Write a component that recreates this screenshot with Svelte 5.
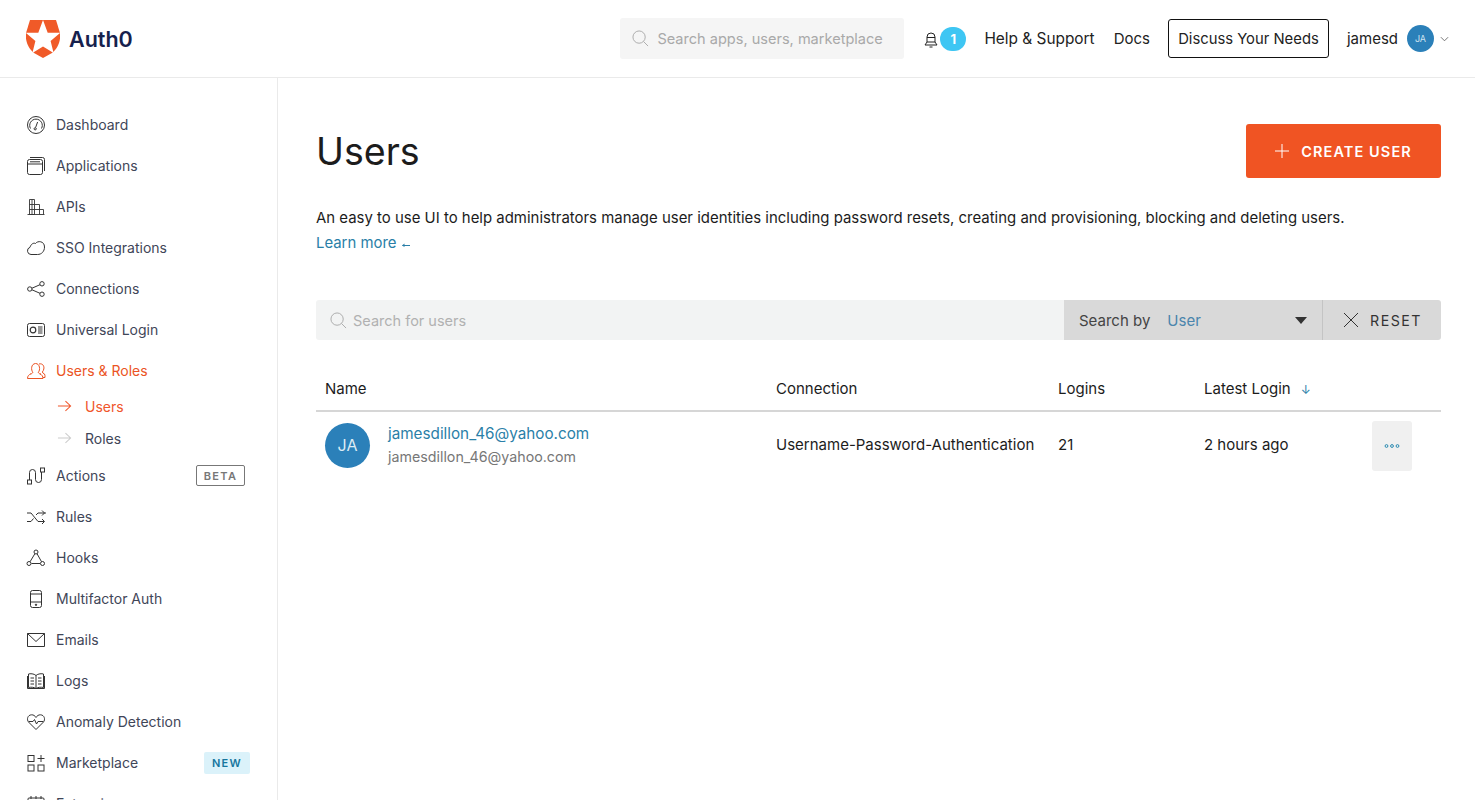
<script lang="ts">
	type NavItem = { label: string; icon: string; active?: boolean; badge?: string; sub?: { label: string; active?: boolean }[] };

	const nav: NavItem[] = [
		{ label: 'Dashboard', icon: 'dashboard' },
		{ label: 'Applications', icon: 'apps' },
		{ label: 'APIs', icon: 'apis' },
		{ label: 'SSO Integrations', icon: 'cloud' },
		{ label: 'Connections', icon: 'share' },
		{ label: 'Universal Login', icon: 'login' },
		{
			label: 'Users & Roles',
			icon: 'users',
			active: true,
			sub: [{ label: 'Users', active: true }, { label: 'Roles' }]
		},
		{ label: 'Actions', icon: 'actions', badge: 'BETA' },
		{ label: 'Rules', icon: 'rules' },
		{ label: 'Hooks', icon: 'hooks' },
		{ label: 'Multifactor Auth', icon: 'phone' },
		{ label: 'Emails', icon: 'mail' },
		{ label: 'Logs', icon: 'book' },
		{ label: 'Anomaly Detection', icon: 'heart' },
		{ label: 'Marketplace', icon: 'market', badge: 'NEW' },
		{ label: 'Extensions', icon: 'ext' }
	];
</script>

{#snippet navIcon(name: string)}
	<svg class="nav-icon" viewBox="0 0 20 20" fill="none" stroke="currentColor" stroke-width="1">
		{#if name === 'dashboard'}
			<circle cx="10" cy="10" r="8.5" />
			<path d="M4.5 13.500a6.300 6.300 0 1 1 11 0" />
			<path d="M9.600 12.500l2-5.500" /><circle cx="9.200" cy="13.800" r="1.100" />
		{:else if name === 'apps'}
			<rect x="1.500" y="3.500" width="15" height="15" rx="2" />
			<path d="M4 1.500h12.500a2 2 0 0 1 2 2V15M1.500 8h15M4 5.800h10" />
		{:else if name === 'apis'}
			<path d="M3.500 2.500h5v15h-5zM3.500 7.500h5M3.500 12.500h14v5M8.500 7.500h5v10M1.500 17.500h17M6 2.500v15" stroke-width=".9" />
		{:else if name === 'cloud'}
			<path d="M5 16.500a3.700 3.700 0 0 1-1-7.200C5 6 7.500 4.500 9.500 5.500 11.500 2.500 18.500 2.800 18.500 9c0 4.500-3 7.500-7 7.500z" />
		{:else if name === 'share'}
			<circle cx="3.800" cy="10" r="2.200" /><circle cx="16" cy="4.800" r="2.200" /><circle cx="16" cy="15.200" r="2.200" />
			<path d="M6 9.200l8-3.500M6 10.800l8 3.500" />
		{:else if name === 'login'}
			<rect x="1.500" y="3.500" width="17" height="13" rx="2" />
			<circle cx="7" cy="10" r="2.800" stroke-width="1.200" />
			<path d="M12 7h4.500M12 9h4.500M12 11h4.500M12 13h4.500" />
		{:else if name === 'users'}
			<path d="M4 13c1.500 0 2.500-.6 2.800-1.700C5 9 4.800 3 9.500 2.500 14 2.500 14.500 9 12.300 11.300c.3 1.100 1.200 1.700 2.700 1.700" />
			<path d="M1.500 17.500c0-2.500 1.500-4 3-4.300M1.500 17.500h15.500c0-2-1.200-4-3-4.500" />
			<path d="M13 3c3.500-1 5.500 2 4.800 5-.2 1.200-.8 2.300-1.500 3 .3 1 1 1.500 2.200 2 .5 1 .6 2 .5 3.500h-2" />
		{:else if name === 'actions'}
			<rect x="1.500" y="14" width="4" height="4" /><rect x="14.500" y="2" width="4" height="4" />
			<path d="M3.500 14V6.500a3 3 0 0 1 6 0v7a3 3 0 0 0 6 0V6" />
		{:else if name === 'rules'}
			<path d="M1 6h4l7 8.500h6M1 14.500h4l2.500-3M10 8l2-2h8M16 3.500L18.500 6 16 8.500M16 12l2.500 2.500L16 17" />
		{:else if name === 'hooks'}
			<circle cx="10" cy="4" r="2" /><circle cx="3" cy="15.500" r="2" /><circle cx="16.500" cy="15.500" r="2" />
			<path d="M8.900 5.700L4 13.800M11 5.700l4.500 8M5.500 15.500h8.500" />
		{:else if name === 'phone'}
			<rect x="4.500" y="1.500" width="11" height="17" rx="2" />
			<path d="M4.500 5h11M4.500 13h11" /><circle cx="10" cy="15.800" r=".7" fill="currentColor" />
		{:else if name === 'mail'}
			<path d="M1.500 3.500h17v13h-17zM1.500 3.500l8.500 8 8.500-8" />
		{:else if name === 'book'}
			<path d="M10 4.500C8 2.500 4 2.500 2.500 3v13.500c2-.5 5.500-.5 7.500 1 2-1.500 5.500-1.500 7.500-1V3C16 2.500 12 2.500 10 4.500zM10 4.500v13M1.500 5v12.500h17V5" />
			<path d="M4.500 7h3.500M4.500 10h3.500M4.500 13h3.500M12 7h3.500M12 10h3.500M12 13h3.500" />
		{:else if name === 'heart'}
			<path d="M10 17.500L2.500 10C.5 7.500 1.500 3 5.500 2.800 7.500 2.700 9 3.800 10 5.500c1-1.700 2.500-2.800 4.500-2.700 4 .2 5 4.700 3 7.200z" />
			<path d="M3 9.500h4l1.500-2 2 4.500 1.500-2.500h5" />
		{:else if name === 'market'}
			<rect x="2" y="2.500" width="6" height="6" /><rect x="2" y="12" width="6" height="6" /><rect x="12" y="12" width="6" height="6" />
			<path d="M15 2v7M11.500 5.500h7" />
		{:else}
			<rect x="2" y="4" width="16" height="14" rx="1" /><path d="M2 8h16M5 2v3M10 2v3M15 2v3" />
		{/if}
	</svg>
{/snippet}

{#snippet arrow()}
	<svg class="sub-arrow" viewBox="0 0 16 12" fill="none" stroke="currentColor" stroke-width="1.100">
		<path d="M1 6h13.500M9 .8L14.500 6 9 11.200" />
	</svg>
{/snippet}

<div class="page">
	<header class="topbar">
		<div class="brand">
			<svg class="logo" viewBox="0 0 34 38">
				<path fill="#f05a28" d="M4 0h26l4 13c1 9-3 16-8 20l-9 5-9-5C3 29-1 22 0 13z" />
				<path fill="#fff" d="M17 0l4.700 12.800h12.400l-9.500 8.200 3 12-10.600-6.500L6.400 33l3-12-9.500-8.200h12.400z" />
			</svg>
			<span class="wordmark">Auth0</span>
		</div>
		<div class="top-right">
			<div class="top-search">
				<svg class="search-icon" viewBox="0 0 18 18" fill="none" stroke="currentColor"><circle cx="7.500" cy="7.500" r="6.500" /><path d="M12.200 12.200L17 17" /></svg>
				<span>Search apps, users, marketplace</span>
			</div>
			<div class="notif">
				<svg class="bell" viewBox="0 0 14 16" fill="none" stroke="#222" stroke-width="1">
					<path d="M3 10V5a4 4 0 0 1 8 0v5M3 5.500h8M3 10l-2 3h12l-2-3zM5.500 15h3" />
				</svg>
				<span class="count">1</span>
			</div>
			<span class="top-link help">Help &amp; Support</span>
			<span class="top-link docs">Docs</span>
			<span class="discuss">Discuss Your Needs</span>
			<span class="top-link username">jamesd</span>
			<span class="avatar-small">JA</span>
			<svg class="caret" viewBox="0 0 10 6" fill="none" stroke="#666"><path d="M1 1l4 4 4-4" /></svg>
		</div>
	</header>

	<div class="body">
		<nav class="sidebar">
			{#each nav as item}
				<div class="nav-item" class:active={item.active}>
					{@render navIcon(item.icon)}
					<span>{item.label}</span>
					{#if item.badge}
						<span class="badge {item.badge.toLowerCase()}">{item.badge}</span>
					{/if}
				</div>
				{#if item.sub}
					<div class="sub-list">
						{#each item.sub as s}
							<div class="sub-item" class:active={s.active}>
								{@render arrow()}
								<span>{s.label}</span>
							</div>
						{/each}
					</div>
				{/if}
			{/each}
		</nav>

		<main class="content">
			<div class="title-row">
				<h1>Users</h1>
				<button type="button" class="create">
					<svg viewBox="0 0 14 14" fill="none" stroke="currentColor"><path d="M7 0v14M0 7h14" /></svg>
					CREATE USER
				</button>
			</div>
			<p class="intro">An easy to use UI to help administrators manage user identities including password resets, creating and provisioning, blocking and deleting users.</p>
			<a class="learn" href="#learn">Learn more
				<svg class="learn-arrow" viewBox="0 0 9 6" fill="none" stroke="currentColor"><path d="M9 3.500H1.500" /><path d="M3.500 1.500L1 3.500l2.500 1.500" fill="currentColor" stroke="none" /></svg>
			</a>

			<div class="filter">
				<div class="filter-input">
					<svg class="search-icon" viewBox="0 0 18 18" fill="none" stroke="currentColor"><circle cx="7.500" cy="7.500" r="6.500" /><path d="M12.200 12.200L17 17" /></svg>
					<span>Search for users</span>
				</div>
				<div class="filter-by">
					<span class="by-label">Search by</span>
					<span class="by-value">User</span>
					<span class="tri"></span>
				</div>
				<div class="reset">
					<svg viewBox="0 0 16 16" fill="none" stroke="currentColor"><path d="M1 1l14 14M15 1L1 15" /></svg>
					<span>RESET</span>
				</div>
			</div>

			<div class="table">
				<div class="row head">
					<div class="col-name">Name</div>
					<div class="col-conn">Connection</div>
					<div class="col-logins">Logins</div>
					<div class="col-latest">Latest Login <span class="sort">↓</span></div>
				</div>
				<div class="row">
					<div class="col-name user-cell">
						<span class="avatar">JA</span>
						<div class="user-text">
							<span class="email">jamesdillon_46@yahoo.com</span>
							<span class="email-sub">jamesdillon_46@yahoo.com</span>
						</div>
					</div>
					<div class="col-conn cell">Username-Password-Authentication</div>
					<div class="col-logins cell">21</div>
					<div class="col-latest cell">2 hours ago</div>
					<div class="more">
						<svg viewBox="0 0 16 4" fill="none" stroke="currentColor"><circle cx="2.500" cy="2" r="1.400" /><circle cx="8" cy="2" r="1.400" /><circle cx="13.500" cy="2" r="1.400" /></svg>
					</div>
				</div>
			</div>
		</main>
	</div>
</div>

<style>
	:global(body) {
		background: #fff;
	}

	.page {
		height: 800px;
		overflow: hidden;
		font-family: 'Inter', 'Liberation Sans', sans-serif;
		font-size: 14px;
		color: #1e212a;
	}

	.topbar {
		height: 77px;
		border-bottom: 1px solid #eaeaea;
		display: flex;
		align-items: center;
		justify-content: space-between;
		padding: 0 26px;
	}

	.brand {
		display: flex;
		align-items: center;
		gap: 9px;
	}

	.logo {
		width: 34px;
		height: 38px;
	}

	.wordmark {
		font-size: 21.500px;
		font-weight: 600;
		color: #16214d;
	}

	.top-right {
		display: flex;
		align-items: center;
	}

	.top-search {
		width: 284px;
		height: 41px;
		background: #f5f5f5;
		border-radius: 3px;
		display: flex;
		align-items: center;
		box-sizing: border-box;
		padding-left: 12px;
		gap: 8px;
		color: #a9a9a9;
		font-size: 14.550px;
	}

	.search-icon {
		width: 17px;
		height: 17px;
		color: #a9a9a9;
		flex: none;
	}

	.notif {
		display: flex;
		align-items: center;
		margin-left: 20px;
	}

	.bell {
		width: 14px;
		height: 16px;
		margin-top: 3px;
	}

	.count {
		width: 26px;
		height: 24px;
		border-radius: 12px;
		background: #3ec6f3;
		color: #fff;
		font-weight: 700;
		font-size: 13px;
		display: flex;
		align-items: center;
		justify-content: center;
		margin-left: 2px;
	}

	.top-link {
		font-size: 15px;
		margin-left: 18px;
		color: #222;
	}

	.help {
		font-size: 15.400px;
		margin-left: 18px;
	}

	.docs {
		margin-left: 19px;
	}

	.discuss {
		margin-left: 18px;
		height: 39px;
		box-sizing: border-box;
		width: 161px;
		border: 1px solid #111;
		border-radius: 3px;
		display: flex;
		align-items: center;
		justify-content: center;
		font-size: 14.800px;
		color: #222;
	}

	.avatar-small {
		width: 27px;
		height: 27px;
		border-radius: 50%;
		background: #2b80b9;
		color: #cfe3f0;
		font-size: 9px;
		display: flex;
		align-items: center;
		justify-content: center;
		margin-left: 9px;
	}

	.caret {
		width: 9px;
		height: 6px;
		margin-left: 6px;
	}

	.body {
		display: flex;
	}

	.sidebar {
		width: 278px;
		height: 722px;
		flex: none;
		border-right: 1px solid #eaeaea;
		box-sizing: border-box;
		padding-top: 26px;
		padding-left: 26px;
	}

	.nav-item {
		height: 41px;
		display: flex;
		align-items: center;
		color: #3f4658;
		padding-right: 28px;
	}

	.nav-item.active {
		color: #eb5424;
	}

	.nav-icon {
		width: 20px;
		height: 20px;
		flex: none;
		margin-right: 10px;
		color: #333;
	}

	.active .nav-icon {
		color: #eb5424;
	}

	.badge {
		margin-left: auto;
		font-size: 11px;
		font-weight: 600;
		letter-spacing: 1.300px;
		display: flex;
		align-items: center;
		justify-content: center;
		height: 21px;
		border-radius: 2px;
		box-sizing: border-box;
	}

	.badge.beta {
		width: 49px;
		margin-right: 4px;
		border: 1px solid #777;
		color: #777;
	}

	.badge.new {
		width: 46px;
		margin-right: -1px;
		height: 22px;
		background: #dbf2fa;
		color: #16769e;
	}

	.sub-list {
		margin-top: -1px;
		margin-bottom: 1px;
	}

	.sub-item {
		height: 32px;
		display: flex;
		align-items: center;
		padding-left: 31px;
		color: #3f4658;
	}

	.sub-item.active {
		color: #f0562b;
	}

	.sub-arrow {
		width: 15px;
		height: 12px;
		margin-right: 13px;
		color: #ccc;
	}

	.sub-item.active .sub-arrow {
		color: #f0562b;
	}

	.content {
		flex: 1;
		padding: 46px 34px 0 38px;
		min-width: 0;
	}

	.title-row {
		display: flex;
		align-items: flex-start;
		justify-content: space-between;
	}

	h1 {
		margin: 0;
		font-size: 37.600px;
		line-height: 56px;
		font-weight: 400;
		color: #1c1c1c;
	}

	.create {
		width: 195px;
		height: 54px;
		border: 0;
		border-radius: 3px;
		background: #f05423;
		color: #fff;
		font: 600 14.500px 'Inter', 'Liberation Sans', sans-serif;
		letter-spacing: 1.100px;
		display: flex;
		align-items: center;
		justify-content: center;
		gap: 12px;
	}

	.create svg {
		width: 14px;
		height: 14px;
	}

	.intro {
		margin: 25px 0 0;
		font-size: 14.950px;
		line-height: 26px;
		color: #1c1c1c;
		white-space: nowrap;
	}

	.learn {
		display: block;
		margin-top: -1px;
		font-size: 14.900px;
		line-height: 26px;
		color: #2a7fa8;
		text-decoration: none;
	}

	.learn-arrow {
		width: 9px;
		height: 6px;
	}

	.filter {
		margin-top: 44px;
		height: 40px;
		display: flex;
		border-radius: 3px;
		overflow: hidden;
	}

	.filter-input {
		flex: 1;
		background: #f2f3f3;
		display: flex;
		align-items: center;
		padding-left: 14px;
		gap: 6px;
		color: #b1b1b1;
		font-size: 14.500px;
	}

	.filter-by {
		width: 258px;
		background: #d9d9d9;
		display: flex;
		align-items: center;
		padding: 0 15px;
		box-sizing: border-box;
		color: #444;
		font-size: 15px;
	}

	.by-value {
		margin-left: 17px;
		color: #4a85ad;
	}

	.tri {
		margin-left: auto;
		border-left: 6px solid transparent;
		border-right: 6px solid transparent;
		border-top: 7px solid #333;
	}

	.reset {
		width: 119px;
		background: #d9d9d9;
		border-left: 1px solid #c4c4c4;
		box-sizing: border-box;
		display: flex;
		align-items: center;
		padding-left: 20px;
		gap: 11px;
		color: #333;
		font-size: 14.200px;
		letter-spacing: 1.500px;
	}

	.reset svg {
		width: 16px;
		height: 16px;
	}

	.table {
		margin-top: 28px;
		font-size: 15px;
	}

	.row {
		display: flex;
		align-items: center;
		position: relative;
		height: 66px;
		padding-left: 9px;
		color: #1c1c1c;
	}

	.row.head {
		height: 40px;
		padding-bottom: 2px;
		border-bottom: 2px solid #d6d6d6;
	}

	.cell {
		margin-top: -2px;
	}

	.col-name {
		width: 451px;
		flex: none;
	}

	.col-conn {
		width: 282px;
		flex: none;
	}

	.col-logins {
		width: 146px;
		flex: none;
	}

	.sort {
		color: #2a7fa8;
		font-size: 12px;
		margin-left: 6px;
	}

	.user-cell {
		display: flex;
		align-items: center;
		gap: 18px;
	}

	.avatar {
		width: 45px;
		height: 45px;
		border-radius: 50%;
		background: #2b80b9;
		color: #dcebf4;
		font-size: 16px;
		display: flex;
		align-items: center;
		justify-content: center;
	}

	.user-text {
		display: flex;
		flex-direction: column;
		gap: 5px;
		margin-top: -2px;
	}

	.email {
		color: #2a7fa8;
		font-size: 15.250px;
	}

	.email-sub {
		color: #777;
		font-size: 14.250px;
	}

	.more {
		position: absolute;
		right: 29px;
		top: 9px;
		width: 40px;
		height: 50px;
		border-radius: 3px;
		background: #f0f0f0;
		color: #2a8ab0;
		display: flex;
		align-items: center;
		justify-content: center;
	}

	.more svg {
		width: 16px;
		height: 4px;
	}
</style>
